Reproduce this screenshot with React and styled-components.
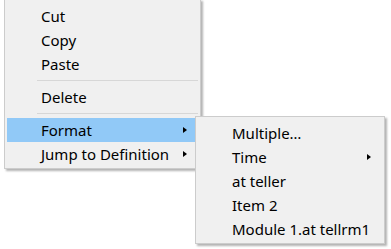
import styled, { createGlobalStyle } from 'styled-components';

const GlobalStyle = createGlobalStyle`
  html, body {
    margin: 0;
    padding: 0;
    background: #ffffff;
  }
  body {
    font-family: "Noto Sans", "Open Sans", sans-serif;
    font-size: 15px;
    color: #000;
  }
`;

const Stage = styled.div`
  position: relative;
  width: 391px;
  height: 249px;
  overflow: hidden;
`;

const Menu = styled.div`
  box-sizing: border-box;
  width: ${(p) => p.$width}px;
  background: #f0f0f0;
  border: 1px solid #cccccc;
  padding: ${(p) => p.$pad};
  box-shadow: 2px 2px 2px rgba(0, 0, 0, 0.3);
`;

const MainMenu = styled(Menu)`
  margin: -1px 0 0 4px;
`;

const SubMenu = styled(Menu)`
  position: absolute;
  left: 195px;
  top: 116px;
`;

const Item = styled.div`
  height: 24px;
  margin: 0 2px;
  display: flex;
  align-items: center;
  justify-content: space-between;
  padding: 0 11px 0 ${(p) => p.$indent}px;
  background: ${(p) => (p.$active ? '#91c9f7' : 'transparent')};
  white-space: nowrap;
  line-height: 1;
`;

const Label = styled.span`
  display: block;
`;

const Arrow = styled.span`
  width: 0;
  height: 0;
  border-top: 3.5px solid transparent;
  border-bottom: 3.5px solid transparent;
  border-left: 4px solid #000;
`;

const Separator = styled.div`
  height: 9px;
  display: flex;
  align-items: center;
  margin: 0 2px 0 32px;
  &::after {
    content: '';
    flex: 1;
    height: 1px;
    background: #d7d7d7;
  }
`;

const mainItems = [
  { label: 'Cut' },
  { label: 'Copy' },
  { label: 'Paste' },
  { sep: true },
  { label: 'Delete' },
  { sep: true },
  { label: 'Format', sub: true, active: true },
  { label: 'Jump to Definition', sub: true },
];

const subItems = [
  { label: 'Multiple…' },
  { label: 'Time', sub: true },
  { label: 'at teller' },
  { label: 'Item 2' },
  { label: 'Module 1.at tellrm1' },
];

const renderItems = (items, indent) =>
  items.map((it, i) =>
    it.sep ? (
      <Separator key={i} />
    ) : (
      <Item key={i} $active={it.active} $indent={indent}>
        <Label>{it.label}</Label>
        {it.sub && <Arrow />}
      </Item>
    )
  );

export default function App() {
  return (
    <Stage>
      <GlobalStyle />
      <MainMenu $width={197} $pad="4px 0 2px">
        {renderItems(mainItems, 34)}
      </MainMenu>
      <SubMenu $width={190} $pad="4px 0 2px">
        {renderItems(subItems, 34)}
      </SubMenu>
    </Stage>
  );
}
